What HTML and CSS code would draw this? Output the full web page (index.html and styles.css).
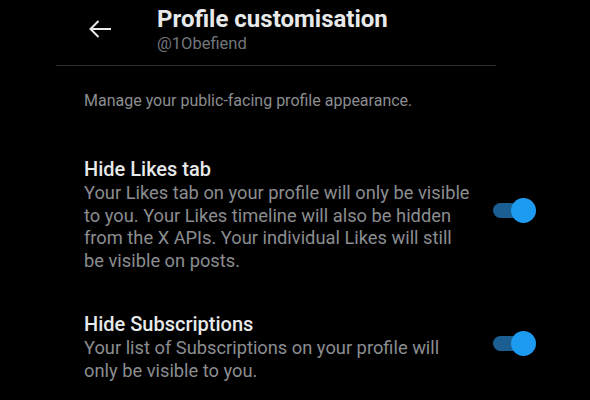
FILE: index.html
```html
<!DOCTYPE html>
<html lang="en">
  <head>
    <meta charset="UTF-8" />
    <meta name="viewport" content="width=device-width, initial-scale=1.0" />
    <title>Profile customisation</title>
    <link rel="stylesheet" href="styles.css">
  </head>
  <body>
    <header class="top-bar">
      <button class="back-button" aria-label="Back">
        <svg width="24" height="20" viewBox="0 0 24 20">
          <path d="M23 10H2.5M10.5 2L2.5 10l8 8" fill="none" stroke="#e7e9ea" stroke-width="2" />
        </svg>
      </button>
      <div class="title-block">
        <h1>Profile customisation</h1>
        <span class="handle">@1Obefiend</span>
      </div>
    </header>

    <main class="settings">
      <p class="intro">Manage your public-facing profile appearance.</p>

      <div class="setting-row">
        <div class="setting-text">
          <h2>Hide Likes tab</h2>
          <p>
            Your Likes tab on your profile will only be visible to you. Your
            Likes timeline will also be hidden from the X APIs. Your individual
            Likes will still be visible on posts.
          </p>
        </div>
        <span class="switch on"><span class="knob"></span></span>
      </div>

      <div class="setting-row">
        <div class="setting-text">
          <h2>Hide Subscriptions</h2>
          <p>
            Your list of Subscriptions on your profile will only be visible to
            you.
          </p>
        </div>
        <span class="switch on"><span class="knob"></span></span>
      </div>
    </main>
  </body>
</html>
```

FILE: styles.css
```css
body {
  font-family: Roboto, "Noto Sans", sans-serif;
  background-color: #000;
  color: #e7e9ea;
  margin: 0;
  padding: 0;
}
.top-bar {
  display: flex;
  align-items: flex-start;
  margin-left: 56px;
  width: 440px;
  height: 66px;
  border-bottom: 1px solid #2a2c2e;
  box-sizing: border-box;
}
.back-button {
  background: none;
  border: none;
  padding: 0;
  margin: 19px 0 0 32px;
  width: 24px;
  height: 20px;
  cursor: pointer;
}
.title-block {
  display: flex;
  flex-direction: column;
  margin: 5px 0 0 45px;
}
h1 {
  margin: 0;
  font-size: 24px;
  line-height: 28px;
  font-weight: 700;
  color: #e7e9ea;
}
.handle {
  font-size: 16.5px;
  line-height: 22px;
  color: #71767b;
}
.settings {
  padding: 0 63px 0 84px;
}
.intro {
  margin: 24px 0 0;
  font-size: 16px;
  line-height: 22px;
  color: #8b8d90;
}
.setting-row {
  display: flex;
  align-items: center;
  gap: 20px;
  margin-top: 45px;
}
.setting-row + .setting-row {
  margin-top: 40px;
}
.setting-text {
  flex: 1;
  max-width: 392px;
}
h2 {
  margin: 0;
  font-size: 20px;
  line-height: 25px;
  font-weight: 500;
  color: #e7e9ea;
}
.setting-text p {
  margin: 0;
  font-size: 18.3px;
  line-height: 22.5px;
  color: #8b8d90;
}
.switch {
  position: relative;
  display: inline-block;
  width: 34px;
  height: 15px;
  margin: 0 0 8px auto;
  border-radius: 8px;
  background-color: #1a5e92;
}
.knob {
  position: absolute;
  top: -5px;
  right: -9px;
  width: 25px;
  height: 25px;
  border-radius: 50%;
  background-color: #1d9bf0;
}
```
